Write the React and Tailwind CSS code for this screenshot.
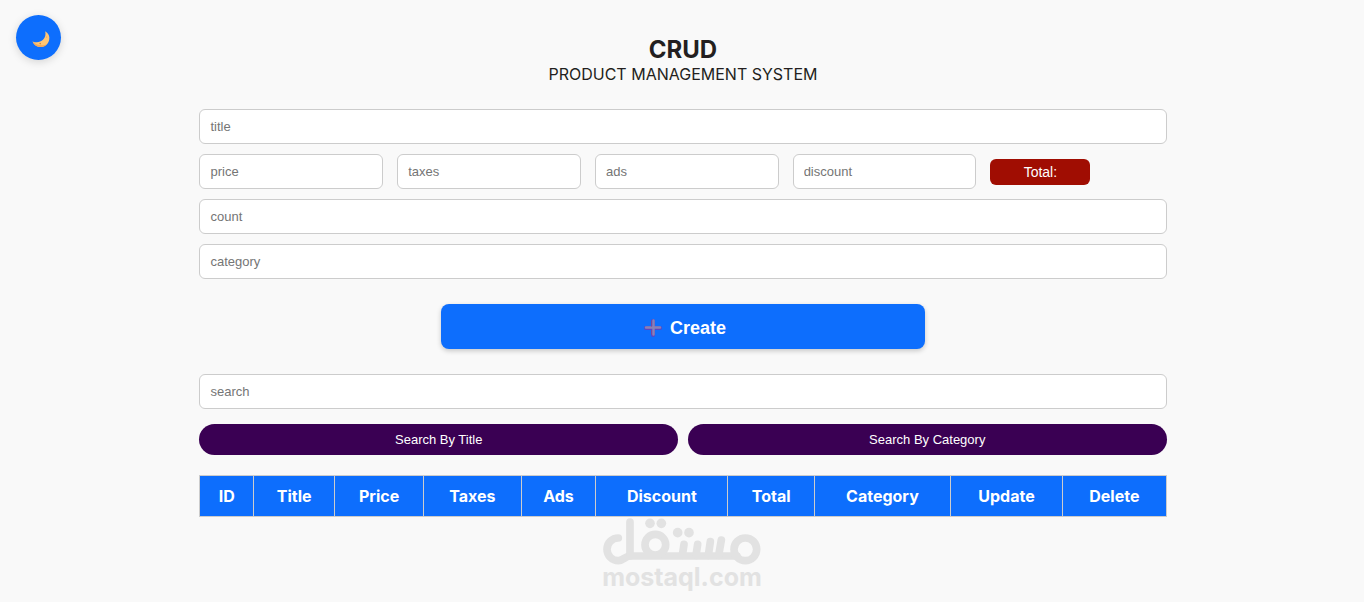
const fieldClass =
  'block h-[35px] min-w-0 rounded-md border border-[#ccc] bg-white px-2.5 text-[13px] text-[#222] placeholder:text-[#757575]';

const columns = ['ID', 'Title', 'Price', 'Taxes', 'Ads', 'Discount', 'Total', 'Category', 'Update', 'Delete'];

function Field({ name, className, type = 'text' }) {
  return (
    <input
      type={type}
      id={name}
      name={name}
      placeholder={name}
      aria-label={name}
      className={`${fieldClass} ${className}`}
    />
  );
}

function MoonIcon() {
  return (
    <svg viewBox="0 0 18 18" className="h-[18px] w-[18px]" aria-hidden="true">
      <path d="M13.2 0.3C16.6 2.2 18 5.4 17.2 8.8C16.4 12.8 13.4 15.6 9.4 16C5.6 16.3 2.2 14.2 0.5 10.4C4.4 12 8.4 11.4 11 8.8C13.2 6.6 14 3.6 13.2 0.3Z" fill="#ffc675" />
      <path d="M0.5 10.4C2.2 14.2 5.6 16.3 9.4 16C11.6 15.8 13.6 14.8 15 13.2C11 15 5 14.6 0.5 10.4Z" fill="#f3a95b" />
      <circle cx="8.2" cy="12.6" r="0.8" fill="#c98548" />
      <circle cx="14.6" cy="6" r="0.6" fill="#dfa063" />
    </svg>
  );
}

function PlusIcon() {
  return (
    <svg viewBox="0 0 18 18" className="h-[18px] w-[18px]" aria-hidden="true">
      <path d="M9 2V16M2 9H16" stroke="#5a45c4" strokeWidth="4" strokeLinecap="round" />
      <path d="M9.5 1.5V15.5M2 8.5H16" stroke="#8a82b4" strokeWidth="2.4" strokeLinecap="round" />
      <path d="M7.5 1.5V7.5M7.5 11V15.5" stroke="#7a4796" strokeWidth="1" />
    </svg>
  );
}

function BrandMark() {
  return (
    <svg viewBox="38 38 474 141" className="h-[47px] w-[158px]" role="img" aria-label="مستقل">
      <g fill="none" stroke="#e2e2e2" strokeWidth="23" strokeLinecap="round" strokeLinejoin="round">
        <path d="M84 98A34 34 0 1 0 84 166C99 166 105 152 119 152H440" />
        <path d="M119 50V152" />
        <circle cx="195" cy="118" r="31" />
        <path d="M281 117L276 150M322 117L317 150M360 109L354 150M393 104L385 150" />
        <circle cx="465" cy="132" r="34" />
      </g>
      <g fill="#e2e2e2">
        <circle cx="179" cy="54" r="14.5" />
        <circle cx="213" cy="54" r="14.5" />
        <circle cx="262" cy="82" r="14.5" />
        <circle cx="296" cy="82" r="14.5" />
      </g>
    </svg>
  );
}

export default function App() {
  return (
    <div className="min-h-screen bg-[#f9f9f9] pl-0.5 font-['Liberation_Sans',Arial,sans-serif] text-[#222]">
      <button
        type="button"
        aria-label="Toggle dark mode"
        className="fixed top-[15px] left-4 flex h-[45px] w-[45px] items-center justify-center rounded-full bg-[#0d6efd] pt-1 pl-1 shadow-[0_2px_8px_rgba(0,0,0,0.15)]"
      >
        <MoonIcon />
      </button>

      <main className="mx-auto w-[71%] pt-9">
        <header className="mb-[25px] text-center font-[Inter,sans-serif] text-[#231f20]">
          <h1 className="text-2xl leading-7 font-bold">CRUD</h1>
          <p className="text-base leading-5">PRODUCT MANAGEMENT SYSTEM</p>
        </header>

        <form className="flex flex-col gap-2.5" onSubmit={(e) => e.preventDefault()}>
          <Field name="title" className="w-full" />
          <div className="flex items-center gap-3.5">
            <Field name="price" className="w-[19%]" />
            <Field name="taxes" className="w-[19%]" />
            <Field name="ads" className="w-[19%]" />
            <Field name="discount" className="w-[19%]" />
            <output className="w-[100px] rounded-md bg-[#a00d02] text-center text-sm leading-[26px] text-white">Total:</output>
          </div>
          <Field name="count" className="w-full" />
          <Field name="category" className="w-full" />
          <button
            type="submit"
            className="mx-auto my-[15px] flex h-[45px] w-1/2 items-center justify-center gap-2 rounded-lg bg-[#0d6efd] pt-0.5 pl-1 text-lg font-bold text-white shadow-[0_2px_5px_rgba(0,0,0,0.2)]"
          >
            <PlusIcon />
            Create
          </button>
        </form>

        <section className="mt-2.5">
          <Field name="search" type="search" className="w-full" />
          <div className="mt-[15px] flex gap-2.5 text-[13px] text-white">
            <button type="button" className="h-[31px] flex-1 rounded-full bg-[#3a0053]">Search By Title</button>
            <button type="button" className="h-[31px] flex-1 rounded-full bg-[#3a0053]">Search By Category</button>
          </div>
        </section>

        <table className="mt-5 w-full border-collapse font-[Inter,sans-serif]">
          <thead>
            <tr className="bg-[#0d6efd] text-base leading-5 text-white">
              {columns.map((column) => (
                <th key={column} scope="col" className="border border-[#ccc] p-2.5 font-bold">
                  {column}
                </th>
              ))}
            </tr>
          </thead>
          <tbody />
        </table>

        <footer className="flex flex-col items-center pt-px pr-0.5 text-[#e2e2e2]">
          <BrandMark />
          <p className="font-[Inter,sans-serif] text-[25px] leading-6 font-bold">mostaql.com</p>
        </footer>
      </main>
    </div>
  );
}
